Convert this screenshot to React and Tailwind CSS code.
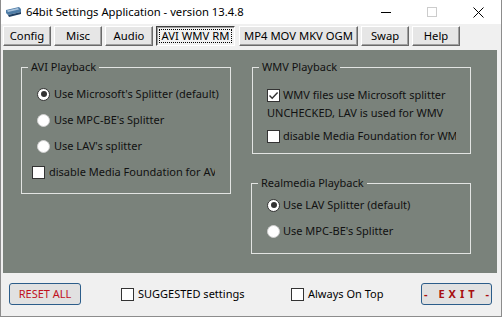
import React from "react";

function Radio({ checked }) {
  return (
    <span
      className={`w-[13px] h-[13px] rounded-full bg-white border flex items-center justify-center shrink-0 ${
        checked ? "border-[#333333]" : "border-[#cfcfcf]"
      }`}
    >
      {checked && <span className="w-[6px] h-[6px] rounded-full bg-[#333333]" />}
    </span>
  );
}

function Check({ checked }) {
  return (
    <span className="w-[13px] h-[13px] bg-white border border-[#333333] flex items-center justify-center shrink-0">
      {checked && (
        <svg width="11" height="11" viewBox="0 0 11 11">
          <path d="M1.5 5.5 L4.2 8.3 L9.6 2.6" fill="none" stroke="#333" strokeWidth="1.4" />
        </svg>
      )}
    </span>
  );
}

function Group({ title, className, children }) {
  return (
    <div className={`relative border border-[#e2e4e2] ${className}`}>
      <span className="absolute -top-[9px] left-[6px] px-[3px] bg-[#7a827b] leading-[16px] text-[#111] whitespace-nowrap">
        {title}
      </span>
      {children}
    </div>
  );
}

function TabButton({ label, width, active }) {
  if (active) {
    return (
      <div
        className={`${width} h-[20px] flex p-[2px] bg-[#f2f2f2] border border-t-[#404040] border-l-[#404040] border-r-white border-b-white shadow-[inset_1px_1px_0_#a0a0a0]`}
      >
        <span className="flex-1 flex items-center justify-center border border-dotted border-black leading-none whitespace-nowrap">
          {label}
        </span>
      </div>
    );
  }
  return (
    <div
      className={`${width} h-[20px] flex items-center justify-center bg-[#e6e6e6] border border-t-white border-l-white border-r-[#696969] border-b-[#696969] shadow-[inset_-1px_-1px_0_#a0a0a0] whitespace-nowrap`}
    >
      {label}
    </div>
  );
}

export default function App() {
  return (
    <div className="w-[502px] h-[317px] flex flex-col bg-[#f0f0f0] border-x border-b border-[#8c8c8c] text-[11.25px] text-black font-['Noto_Sans','Liberation_Sans',sans-serif] overflow-hidden whitespace-nowrap">
      {/* title bar */}
      <div className="h-[24px] bg-white flex items-center shrink-0">
        <svg className="ml-[4px]" width="17" height="12" viewBox="0 0 17 12">
          <path d="M1 4 L14 1 L16 3 L16 6 L3 9 L1 7 Z" fill="#4e7ca6" />
          <path d="M3 9 L16 6 L16 8 L4 11 Z" fill="#1f3f62" />
          <path d="M2 4.5 L13 2 L14 3.5 L3 6 Z" fill="#a9c3dc" />
        </svg>
        <span className="ml-[4px] leading-none">64bit Settings Application - version 13.4.8</span>
        <div className="ml-auto flex items-center h-full">
          <div className="w-[46px] h-full flex items-center justify-center">
            <span className="w-[10px] h-px bg-black" />
          </div>
          <div className="w-[46px] h-full flex items-center justify-center">
            <span className="w-[10px] h-[10px] border border-[#cccccc]" />
          </div>
          <div className="w-[46px] h-full flex items-center justify-center">
            <svg width="11" height="11" viewBox="0 0 11 11">
              <path d="M0.5 0.5 L10.5 10.5 M10.5 0.5 L0.5 10.5" stroke="#000" strokeWidth="1" />
            </svg>
          </div>
        </div>
      </div>

      {/* tabs */}
      <div className="flex gap-[3px] ml-[2px] mt-[2px] shrink-0">
        <TabButton label="Config" width="w-[48px]" />
        <TabButton label="Misc" width="w-[48px]" />
        <TabButton label="Audio" width="w-[48px]" />
        <TabButton label="AVI WMV RM" width="w-[79px]" active />
        <div className="ml-[1px]">
          <TabButton label="MP4 MOV MKV OGM" width="w-[119px]" />
        </div>
        <TabButton label="Swap" width="w-[48px]" />
        <TabButton label="Help" width="w-[48px]" />
      </div>

      {/* main panel */}
      <div className="ml-[2px] mt-[4px] w-[494px] h-[223px] bg-[#7a827b] flex pt-[17px] pl-[18px] shrink-0 text-[#111] text-[11px]">
        <Group title="AVI Playback" className="w-[210px] h-[127px] flex flex-col pt-[13px]">
          <div className="h-[26px] flex items-center pl-[15px] gap-[4px]">
            <Radio checked />
            <span>Use Microsoft's Splitter (default)</span>
          </div>
          <div className="h-[26px] flex items-center pl-[15px] gap-[4px]">
            <Radio />
            <span>Use MPC-BE's Splitter</span>
          </div>
          <div className="h-[26px] flex items-center pl-[15px] gap-[4px]">
            <Radio />
            <span>Use LAV's splitter</span>
          </div>
          <div className="h-[26px] flex items-center pl-[10px] gap-[4px]">
            <Check />
            <span className="w-[166px] overflow-hidden">disable Media Foundation for AVI</span>
          </div>
        </Group>

        <div className="ml-[21px] flex flex-col">
          <Group title="WMV Playback" className="w-[219px] h-[87px] flex flex-col pt-[17px]">
            <div className="h-[20px] flex items-center pl-[14px] gap-[3px]">
              <Check checked />
              <span>WMV files use Microsoft splitter</span>
            </div>
            <div className="h-[16px] flex items-center pl-[14px]">
              <span>UNCHECKED, LAV is used for WMV</span>
            </div>
            <div className="h-[26px] mt-[2px] flex items-center pl-[14px] gap-[3px]">
              <Check />
              <span className="w-[173px] overflow-hidden">disable Media Foundation for WMV</span>
            </div>
          </Group>

          <Group title="Realmedia Playback" className="-ml-px mt-[29px] w-[220px] h-[71px] flex flex-col pt-[8px]">
            <div className="h-[26px] flex items-center pl-[15px] gap-[3px]">
              <Radio checked />
              <span>Use LAV Splitter (default)</span>
            </div>
            <div className="h-[26px] flex items-center pl-[15px] gap-[3px]">
              <Radio />
              <span>Use MPC-BE's Splitter</span>
            </div>
          </Group>
        </div>
      </div>

      {/* bottom bar */}
      <div className="flex items-center ml-[8px] mt-[10px] h-[22px] text-[11px]">
        <div className="w-[72px] h-[22px] flex items-center justify-center rounded-[3px] border border-[#2c5d8a] bg-[#e1e1e1] text-[#c0101c]">
          RESET ALL
        </div>
        <div className="ml-[40px] w-[170px] flex items-center gap-[4px]">
          <Check />
          <span>SUGGESTED settings</span>
        </div>
        <div className="w-[130px] flex items-center gap-[4px]">
          <Check />
          <span>Always On Top</span>
        </div>
        <div className="w-[71px] h-[22px] flex items-center justify-center rounded-[3px] border border-[#2c5d8a] bg-[#e1e1e1] text-[#a80f0f] font-bold tracking-[4px] pl-[4px]">
          - EXIT -
        </div>
      </div>
    </div>
  );
}
